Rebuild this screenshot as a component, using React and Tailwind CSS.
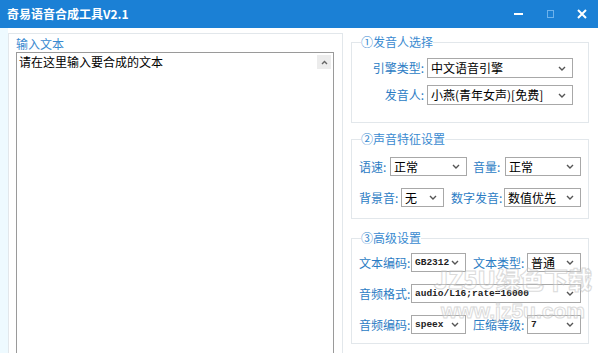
import React from "react";

const cjk = "font-['Noto_Sans_CJK_SC','Microsoft_YaHei',sans-serif]";

const Chevron = () => (
  <svg width="8" height="5" viewBox="0 0 8 5" className="shrink-0">
    <path d="M1 1l3 3 3-3" stroke="#555" strokeWidth="1.4" fill="none" />
  </svg>
);

// dropdown look-alike
const Select = ({ w, h = "h-[19px]", mono, children }) => (
  <div
    className={`flex ${h} ${w} shrink-0 items-center justify-between border border-[#a8a8a8] bg-white pl-[3px] pr-[6px]`}
  >
    <span
      className={
        mono
          ? "font-['Liberation_Mono',monospace] text-[9.5px] font-bold leading-none text-[#222]"
          : "text-[12px] leading-none text-black"
      }
    >
      {children}
    </span>
    <Chevron />
  </div>
);

const Label = ({ w, right, children }) => (
  <span
    className={`${w} shrink-0 whitespace-nowrap text-[12px] leading-none text-[#2b7cc4] ${right ? "text-right pr-[3px]" : ""}`}
  >
    {children}
  </span>
);

const Group = ({ title, h, mt, children }) => (
  <fieldset className={`${h} ${mt} w-[238px] border border-[#e2e7eb]`}>
    <legend className="ml-[9px] text-[12px] leading-[14px] text-[#3a8ad0]">{title}</legend>
    {children}
  </fieldset>
);

export default function App() {
  return (
    <div className={`relative h-[353px] w-[598px] overflow-hidden bg-white ${cjk}`}>
      {/* title bar */}
      <div className="flex h-[28px] items-center bg-[#1b80d5]">
        <span className="pl-[7px] text-[12px] font-bold leading-none text-white">奇易语音合成工具V2.1</span>
        <div className="ml-auto flex h-full">
          <div className="flex w-[32px] items-center justify-center">
            <div className="h-[2px] w-[9px] bg-white" />
          </div>
          <div className="flex w-[32px] items-center justify-center">
            <div className="h-[8px] w-[7px] border border-[#6db2ec]" />
          </div>
          <div className="flex w-[32px] items-center justify-center">
            <svg width="10" height="10" viewBox="0 0 10 10">
              <path d="M1 1l8 8M9 1l-8 8" stroke="#fff" strokeWidth="2" />
            </svg>
          </div>
        </div>
      </div>

      {/* body */}
      <div className="flex h-[325px]">
        <div className="w-[8px] shrink-0 bg-[#eefaff]" />

        {/* left: input text */}
        <div className="mt-[5px] h-[340px] w-[335px] shrink-0 border border-[#e2e7eb]">
          <div className="pl-[7px] pt-[3px] text-[12px] leading-[14px] text-[#3a8ad0]">输入文本</div>
          <div className="ml-[7px] mt-[1px] flex h-[320px] w-[318px] border border-[#9a9a9a] bg-white">
            <div className="flex-1 pl-[2px] pt-[2px] text-[12px] leading-[14px] text-black">
              请在这里输入要合成的文本
            </div>
            <div className="w-[16px] pt-[2px]">
              <div className="flex h-[14px] w-[14px] items-center justify-center bg-[#ececec]">
                <svg width="7" height="5" viewBox="0 0 7 5">
                  <path d="M1 4l2.5-2.5L6 4" stroke="#666" strokeWidth="1.4" fill="none" />
                </svg>
              </div>
            </div>
          </div>
        </div>

        {/* right: settings */}
        <div className="ml-[8px] flex flex-col pt-[7px]">
          <Group title="①发音人选择" h="h-[88px]">
            <div className="mt-[9px] flex items-center">
              <Label w="w-[75px]" right>引擎类型:</Label>
              <Select w="w-[146px]" h="h-[20px]">中文语音引擎</Select>
            </div>
            <div className="mt-[7px] flex items-center">
              <Label w="w-[75px]" right>发音人:</Label>
              <Select w="w-[146px]" h="h-[20px]">小燕(青年女声)[免费]</Select>
            </div>
          </Group>

          <Group title="②声音特征设置" h="h-[87px]" mt="mt-[9px]">
            <div className="mt-[11px] flex items-center pl-[7px]">
              <Label w="w-[31px]">语速:</Label>
              <Select w="w-[77px]">正常</Select>
              <span className="w-[6px]" />
              <Label w="w-[32px]">音量:</Label>
              <Select w="w-[76px]">正常</Select>
            </div>
            <div className="mt-[12px] flex items-center pl-[7px]">
              <Label w="w-[42px]">背景音:</Label>
              <Select w="w-[43px]">无</Select>
              <span className="w-[7px]" />
              <Label w="w-[53px]">数字发音:</Label>
              <Select w="w-[77px]">数值优先</Select>
            </div>
          </Group>

          <Group title="③高级设置" h="h-[113px]" mt="mt-[12px]">
            <div className="mt-[8px] flex items-center pl-[7px]">
              <Label w="w-[52px]">文本编码:</Label>
              <Select w="w-[55px]" mono>GB2312</Select>
              <span className="w-[7px]" />
              <Label w="w-[54px]">文本类型:</Label>
              <Select w="w-[54px]">普通</Select>
            </div>
            <div className="mt-[12px] flex items-center pl-[7px]">
              <Label w="w-[52px]">音频格式:</Label>
              <Select w="w-[170px]" mono>audio/L16;rate=16000</Select>
            </div>
            <div className="mt-[12px] flex items-center pl-[7px]">
              <Label w="w-[52px]">音频编码:</Label>
              <Select w="w-[55px]" mono>speex</Select>
              <span className="w-[7px]" />
              <Label w="w-[54px]">压缩等级:</Label>
              <Select w="w-[54px]" mono>7</Select>
            </div>
          </Group>
        </div>
      </div>

      {/* site watermark */}
      <div className="pointer-events-none absolute left-[434px] top-[262px] flex w-[158px] flex-col items-center opacity-60">
        <span className="whitespace-nowrap text-[24px] font-black leading-[34px] text-white/50 [-webkit-text-stroke:1px_#c4c4c4]">
          JZ5U绿色下载
        </span>
        <span className="whitespace-nowrap font-['Liberation_Sans',sans-serif] text-[21px] font-bold leading-[30px] text-white/50 [-webkit-text-stroke:1px_#c4c4c4]">
          www.jz5u.com
        </span>
      </div>
    </div>
  );
}
